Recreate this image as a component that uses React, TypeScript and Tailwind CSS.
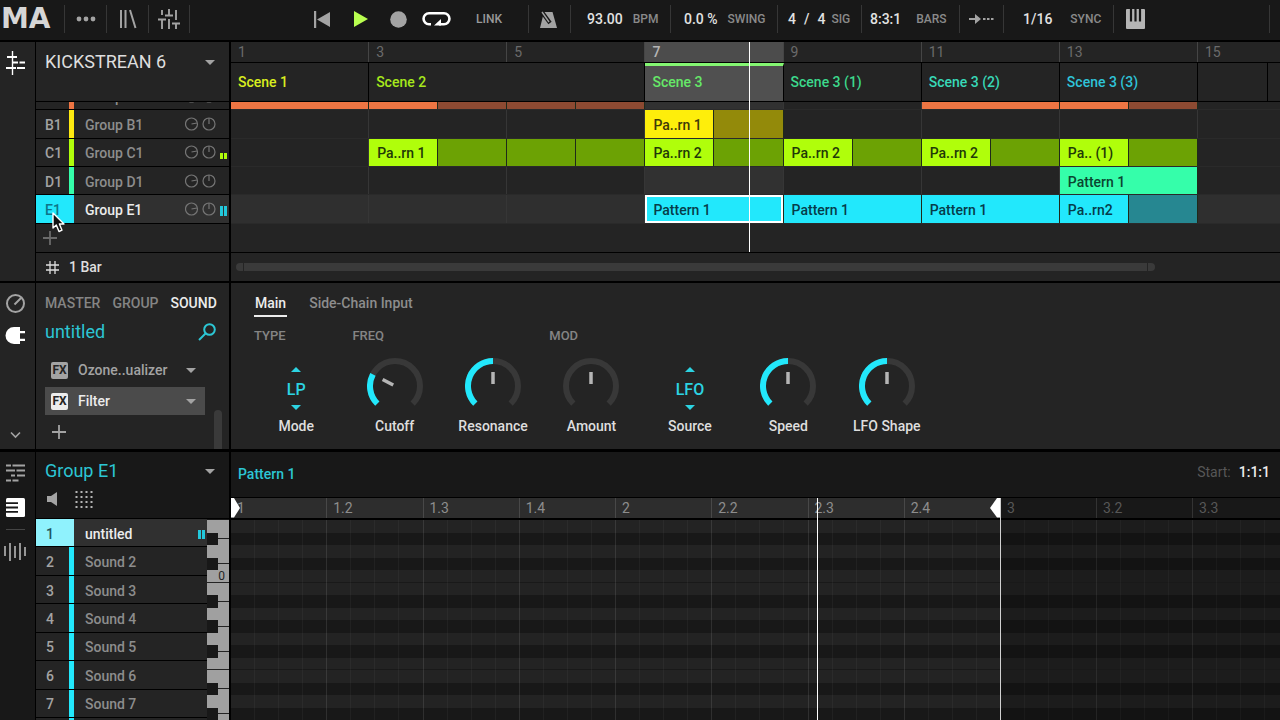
import { useState, type ReactNode } from "react";

type Segment = { span: 1 | 2; label?: string; fill?: string; selected?: boolean; lit?: boolean };

const scenes = [
  { bar: 1, name: "Scene 1", color: "text-[#d9ee1f]" },
  { bar: 3, name: "Scene 2", color: "text-[#a6e81c]" },
  { bar: 5, name: "", color: "" },
  { bar: 7, name: "Scene 3", color: "text-[#66e868]", active: true },
  { bar: 9, name: "Scene 3 (1)", color: "text-[#3cd98c]" },
  { bar: 11, name: "Scene 3 (2)", color: "text-[#38d9b8]" },
  { bar: 13, name: "Scene 3 (3)", color: "text-[#2fc3d9]" },
];

const empty: Segment = { span: 2 };
const lit: Segment = { span: 2, lit: true };

const orange = "bg-[#ee7543]";
const orangeDim = "bg-[#8d4a32]";
const lime = "bg-[#b0fe0b] text-[#1f3a08]";
const limeDim = "bg-[#6ca204]";
const cyan = "bg-[#22e8fc] text-[#063c4a]";

const groups: {
  code?: string;
  name: string;
  border: string;
  meter?: string;
  selected?: boolean;
  segments: Segment[];
}[] = [
  {
    name: "Group A1",
    border: "border-[#ee7543]",
    segments: [
      { span: 2, fill: orange },
      { span: 1, fill: orange },
      { span: 1, fill: orangeDim },
      { span: 1, fill: orangeDim },
      { span: 1, fill: orangeDim },
      lit,
      empty,
      { span: 2, fill: orange },
      { span: 1, fill: orange },
      { span: 1, fill: orangeDim },
    ],
  },
  {
    code: "B1",
    name: "Group B1",
    border: "border-[#fde910]",
    segments: [
      empty,
      empty,
      empty,
      { span: 1, label: "Pa..rn 1", fill: "bg-[#feee0b] text-[#3f3a08]" },
      { span: 1, fill: "bg-[#938a0a]" },
      empty,
      empty,
      empty,
    ],
  },
  {
    code: "C1",
    name: "Group C1",
    border: "border-[#b0fe0b]",
    meter: "h-[6px] bg-[#b0fe0b]",
    segments: [
      empty,
      { span: 1, label: "Pa..rn 1", fill: lime },
      { span: 1, fill: limeDim },
      { span: 1, fill: limeDim },
      { span: 1, fill: limeDim },
      { span: 1, label: "Pa..rn 2", fill: lime },
      { span: 1, fill: limeDim },
      { span: 1, label: "Pa..rn 2", fill: lime },
      { span: 1, fill: limeDim },
      { span: 1, label: "Pa..rn 2", fill: lime },
      { span: 1, fill: limeDim },
      { span: 1, label: "Pa.. (1)", fill: lime },
      { span: 1, fill: limeDim },
    ],
  },
  {
    code: "D1",
    name: "Group D1",
    border: "border-[#35feaa]",
    segments: [
      empty,
      empty,
      empty,
      lit,
      empty,
      empty,
      { span: 2, label: "Pattern 1", fill: "bg-[#35feaa] text-[#0b4631]" },
    ],
  },
  {
    code: "E1",
    name: "Group E1",
    border: "border-[#22e8fc]",
    meter: "h-[10px] bg-[#22c8dc]",
    selected: true,
    segments: [
      empty,
      empty,
      empty,
      { span: 2, label: "Pattern 1", fill: cyan, selected: true },
      { span: 2, label: "Pattern 1", fill: cyan },
      { span: 2, label: "Pattern 1", fill: cyan },
      { span: 1, label: "Pa..rn2", fill: cyan },
      { span: 1, fill: "bg-[#268791]" },
    ],
  },
];

const params = [
  { label: "Mode", section: "TYPE", options: "LP" },
  { label: "Cutoff", section: "FREQ", value: 27 },
  { label: "Resonance", value: 50 },
  { label: "Amount", section: "MOD", value: 50, bipolar: true },
  { label: "Source", options: "LFO" },
  { label: "Speed", value: 50 },
  { label: "LFO Shape", value: 50 },
];

const sounds = ["untitled", "Sound 2", "Sound 3", "Sound 4", "Sound 5", "Sound 6", "Sound 7"];

// Rows of the piano roll from top to bottom
const keys = ["E", "D#", "D", "C#", "C", "B", "A#", "A", "G#", "G", "F#", "F", "E", "D#", "D", "C#"];

const beats = ["1", "1.2", "1.3", "1.4", "2", "2.2", "2.3", "2.4"];
const beatsAfter = ["3", "3.2", "3.3"];

function Caret({ className = "" }: { className?: string }) {
  return (
    <svg width="10" height="5" viewBox="0 0 10 5" className={className} fill="currentColor">
      <path d="M0 0h10L5 5z" />
    </svg>
  );
}

function Plus({ className = "" }: { className?: string }) {
  return (
    <svg width="14" height="14" viewBox="0 0 14 14" className={className} stroke="currentColor" strokeWidth="1.8">
      <path d="M7 0v14M0 7h14" />
    </svg>
  );
}

function Field({ value, unit, className }: { value: ReactNode; unit: string; className: string }) {
  return (
    <div className={`flex h-7 flex-none items-center border-r border-[#363636] ${className}`}>
      <span className="text-sm font-medium text-[#e2e2e2]">{value}</span>
      <span className="text-xs font-medium text-[#8a8a8a]">{unit}</span>
    </div>
  );
}

function Toolbar() {
  const cell = "flex h-7 flex-none items-center justify-center border-r border-[#363636] text-[#a3a3a3]";
  return (
    <header className="flex h-[42px] flex-none items-center border-b-2 border-black bg-[#181818] pb-[2px]">
      <div className="flex h-7 w-[65px] flex-none items-center border-r border-[#363636] pl-px font-['DejaVu_Sans',sans-serif] text-[28px] leading-none font-bold text-[#d6d6d6]">
        MA
      </div>
      <button aria-label="Menu" className={`${cell} w-[42px]`}>
        <svg width="20" height="6" viewBox="0 0 20 6" fill="currentColor">
          <circle cx="3" cy="3" r="2.4" />
          <circle cx="10" cy="3" r="2.4" />
          <circle cx="17" cy="3" r="2.4" />
        </svg>
      </button>
      <button aria-label="Browser" className={`${cell} w-[42px]`}>
        <svg width="18" height="20" viewBox="0 0 18 20" fill="none" stroke="currentColor" strokeWidth="2">
          <path d="M2 1v18M6.500 1v18M11 1l5.500 18" />
        </svg>
      </button>
      <button aria-label="Mixer" className={`${cell} w-[41px]`}>
        <svg width="22" height="20" viewBox="0 0 22 20" fill="none" stroke="currentColor" strokeWidth="1.900">
          <path d="M4 1v5M0 10.500h8M4 10.500V20M11 0v6M7 6.500h8M11 10v10M18 1v10M14 14.500h8M18 14.500V20" />
        </svg>
      </button>

      <div className="flex h-7 w-[339px] flex-none items-center border-r border-[#363636] pl-[113px] text-[#a3a3a3]">
        <button aria-label="Restart" className="flex w-[38px] justify-center">
          <svg width="16" height="17" viewBox="0 0 16 17" fill="currentColor">
            <path d="M0 0h2.200v17H0zM16 1v15L3 8.500z" />
          </svg>
        </button>
        <button aria-label="Play" className="flex w-[38px] justify-center pl-[2px] text-[#b9fe50]">
          <svg width="14" height="16" viewBox="0 0 14 16" fill="currentColor">
            <path d="M0 0l14 8-14 8z" />
          </svg>
        </button>
        <button aria-label="Record" className="flex w-[38px] justify-center">
          <svg width="17" height="17" viewBox="0 0 17 17" fill="currentColor">
            <circle cx="8.500" cy="8.500" r="8.300" />
          </svg>
        </button>
        <button aria-label="Loop" className="flex w-[38px] justify-center text-white">
          <svg width="29" height="16" viewBox="0 0 29 16" fill="none" stroke="currentColor" strokeWidth="2.600">
            <path d="M9 13.200H7a5.300 5.300 0 0 1 0-10.900h15a5.300 5.300 0 0 1 0 10.900h-5" />
            <path d="M12 14.500l7-6.500v6.500z" fill="currentColor" stroke="none" />
          </svg>
        </button>
        <button className="ml-[21px] text-xs font-medium text-[#9a9a9a]">LINK</button>
      </div>

      <button aria-label="Metronome" className={`${cell} w-[42px] pr-[2px]`}>
        <svg width="17" height="17" viewBox="0 0 17 17">
          <path d="M4 1h8.500L17 17H0z" fill="currentColor" />
          <path d="M2 1l8 11" stroke="#181818" strokeWidth="4" />
          <path d="M2 1l7 10" stroke="currentColor" strokeWidth="1.400" />
        </svg>
      </button>
      <Field value="93.00" unit="BPM" className="w-[100px] gap-[10px] pl-4" />
      <Field value="0.0 %" unit="SWING" className="w-[107px] gap-[10px] pl-[13px]" />
      <Field
        value={
          <span className="flex gap-2">
            <span>4</span>
            <span>/</span>
            <span>4</span>
          </span>
        }
        unit="SIG"
        className="w-[84px] gap-[6px] pl-[10px]"
      />
      <Field value="8:3:1" unit="BARS" className="w-[98px] gap-[15px] pl-2" />
      <button aria-label="Follow" className={`${cell} w-11`}>
        <svg width="25" height="10" viewBox="0 0 25 10" fill="currentColor">
          <path d="M0 4h6V0l6 5-6 5V6H0zM14 4h2.500v2H14zM18 4h2.500v2H18zM22 4h2.500v2H22z" />
        </svg>
      </button>
      <Field value="1/16" unit="SYNC" className="w-[110px] gap-[18px] pl-[19px]" />
      <div className="mr-[10px] flex h-7 flex-1 items-center border-r border-[#363636] pl-3">
        <button aria-label="Keyboard" className="text-[#b5b5b5]">
          <svg width="19" height="20" viewBox="0 0 19 20">
            <rect width="19" height="20" rx="1" fill="currentColor" />
            <path d="M5 0v12.500M9.500 0v12.500M14 0v12.500" stroke="#181818" strokeWidth="2.200" />
          </svg>
        </button>
      </div>
    </header>
  );
}

function GroupRow({ group }: { group: (typeof groups)[number] }) {
  return (
    <div className={`flex items-center border-b border-black ${group.selected ? "bg-[#303030] text-[#ececec]" : "text-[#8d8d8d]"}`}>
      <div
        className={`flex h-full w-[38px] flex-none items-center border-r-[5px] pt-[2px] pl-[9px] text-sm font-medium ${group.border} ${
          group.selected ? "bg-[#22e8fc] text-[#0d7488]" : "text-[#a3a3a3]"
        }`}
      >
        {group.code}
      </div>
      <span className="ml-[11px] flex-1 pt-[2px] text-sm font-medium">{group.name}</span>
      <svg width="31" height="14" viewBox="0 0 31 14" fill="none" stroke="#757575" strokeWidth="1.200" className="mr-1">
        <circle cx="6.500" cy="7" r="6" />
        <path d="M6.500 7l5.500-1" />
        <circle cx="24" cy="7" r="6" />
        <path d="M24 1v6" />
      </svg>
      <div className="mr-[2px] flex h-[14px] w-[7px] items-end gap-px">
        {group.meter && (
          <>
            <div className={`w-[3px] ${group.meter}`} />
            <div className={`w-[3px] ${group.meter}`} />
          </>
        )}
      </div>
    </div>
  );
}

function SegmentCell({ seg }: { seg: Segment }) {
  const span = seg.span === 2 ? "col-span-2" : "col-span-1";
  if (!seg.fill) {
    return <div className={`${span} border-r border-[#363636] ${seg.lit ? "bg-[#313131]" : ""}`} />;
  }
  return (
    <div className={`${span} border-r border-[#1f2a1a]`}>
      <div
        className={`flex h-full items-center text-sm font-medium ${seg.fill} ${
          seg.selected ? "border-2 border-white pt-[2px] pl-[6px]" : "pt-[2px] pl-2"
        }`}
      >
        {seg.label}
      </div>
    </div>
  );
}

function Arranger() {
  return (
    <section className="flex flex-none border-b-2 border-black bg-[#242424]">
      <nav className="w-9 flex-none border-r border-black pt-[9px] pl-[5px]">
        <button aria-label="Arranger view" className="block text-white">
          <svg width="20" height="24" viewBox="0 0 20 24" fill="none" stroke="currentColor" strokeWidth="2">
            <path d="M7.500 0v24" strokeWidth="1.400" />
            <path d="M2 6h10M7 11.500h6M14.500 11.500H20M1 17h10M12 17h8" />
          </svg>
        </button>
      </nav>

      <div className="w-[195px] flex-none border-r-2 border-black">
        <div className="h-[60px] border-b border-black">
          <button className="flex h-10 w-full items-center justify-between pr-[14px] pl-[9px] text-lg text-[#dedede]">
            KICKSTREAN 6
            <Caret className="text-[#a3a3a3]" />
          </button>
        </div>
        <div className="flex h-[150px] flex-col justify-end overflow-hidden">
          <div className="grid h-[170px] flex-none grid-rows-6">
            {groups.map((group) => (
              <GroupRow key={group.name} group={group} />
            ))}
            <button aria-label="Add group" className="flex items-center pl-[7px] text-[#6a6a6a]">
              <Plus />
            </button>
          </div>
        </div>
        <button className="flex h-[29px] w-full items-center border-t border-black pl-[10px] text-sm font-medium text-[#dedede]">
          <svg width="13" height="13" viewBox="0 0 13 13" fill="none" stroke="currentColor" strokeWidth="1.300" className="mr-[10px]">
            <path d="M4 0v13M9 0v13M0 4h13M0 9h13" />
          </svg>
          1 Bar
        </button>
      </div>

      <div className="min-w-0 flex-1 overflow-hidden">
        <div className="relative">
          <div className="flex h-[21px] border-b border-black text-sm leading-5 text-[#6b6b6b]">
            <div className="grid w-[967px] flex-none grid-cols-7">
              {scenes.map((s) => (
                <div
                  key={s.bar}
                  className={`border-r border-[#454545] pl-[7px] ${s.active ? "bg-[#4c4c4c] font-medium text-[#b5b5b5]" : ""}`}
                >
                  {s.bar}
                </div>
              ))}
            </div>
            <div className="pl-[7px]">15</div>
          </div>
          <div className="flex h-[39px] border-b border-black text-sm font-medium">
            <div className="grid w-[967px] flex-none grid-cols-7">
              {scenes.map((s) => (
                <div
                  key={s.bar}
                  className={`flex items-center pl-[7px] ${s.color} ${
                    s.active
                      ? "border-t-[3px] border-r border-t-[#84f672] border-r-black bg-[#505050] pb-[3px]"
                      : s.bar === 3
                        ? ""
                        : "border-r border-black"
                  }`}
                >
                  {s.name}
                </div>
              ))}
            </div>
            <div className="w-[70px] flex-none border-r border-black" />
          </div>
          <div className="flex h-[150px] flex-col justify-end overflow-hidden">
            <div className="grid h-[170px] flex-none grid-rows-6">
              {groups.map((group) => (
                <div key={group.name} className={`border-b border-[#2a2a2a] ${group.selected ? "bg-[#2f2f2f]" : ""}`}>
                  <div className="grid h-full w-[967px] grid-cols-14">
                    {group.segments.map((seg, i) => (
                      <SegmentCell key={i} seg={seg} />
                    ))}
                  </div>
                </div>
              ))}
            </div>
          </div>
          {/* Playhead */}
          <div className="absolute inset-y-0 left-[518px] w-px bg-white" />
        </div>
        <div className="flex h-[29px] items-center border-t border-black pl-[5px]">
          <div className="flex h-2 w-[88%] gap-px">
            <div className="w-[7px] rounded-l bg-[#3a3a3a]" />
            <div className="flex-1 bg-[#3a3a3a]" />
            <div className="w-[7px] rounded-r bg-[#3a3a3a]" />
          </div>
        </div>
      </div>
    </section>
  );
}

function point(angle: number, r: number) {
  const a = (angle * Math.PI) / 180;
  return `${28 + r * Math.sin(a)} ${28 - r * Math.cos(a)}`;
}

function arc(from: number, to: number) {
  return `M${point(from, 25)}A25 25 0 ${to - from > 180 ? 1 : 0} 1 ${point(to, 25)}`;
}

function Knob({ id, initial, bipolar }: { id: string; initial: number; bipolar?: boolean }) {
  const [value, setValue] = useState(initial);
  const angle = -135 + value * 2.7;
  const from = bipolar ? Math.min(0, angle) : -135;
  const to = bipolar ? Math.max(0, angle) : angle;
  return (
    <div className="relative h-14 w-14">
      <svg width="56" height="56" viewBox="0 0 56 56" fill="none">
        <path d={arc(-135, 135)} stroke="#383838" strokeWidth="6" />
        {to > from && <path d={arc(from, to)} stroke="#22e8fc" strokeWidth="6" />}
        <path d={`M${point(angle, 2)}L${point(angle, 14)}`} stroke="#b5b5b5" strokeWidth="3.500" />
      </svg>
      <input
        id={id}
        type="range"
        min={0}
        max={100}
        value={value}
        onChange={(e) => setValue(Number(e.target.value))}
        className="absolute inset-0 h-full w-full cursor-pointer opacity-0"
      />
    </div>
  );
}

function Plugins() {
  const slots = [
    { name: "Ozone..ualizer", active: false },
    { name: "Filter", active: true },
  ];
  return (
    <section className="flex h-[169px] flex-none border-b-[3px] border-black bg-[#242424]">
      <nav className="flex w-9 flex-none flex-col border-r border-black pt-[10px] pb-[10px] pl-[5px]">
        <button aria-label="Channel" className="text-[#a3a3a3]">
          <svg width="21" height="21" viewBox="0 0 21 21" fill="none" stroke="currentColor" strokeWidth="2">
            <circle cx="10.500" cy="10.500" r="8.500" />
            <path d="M9.500 11.500l6.500-6.500" />
          </svg>
        </button>
        <button aria-label="Plug-in" className="mt-[13px] text-white">
          <svg width="21" height="17" viewBox="0 0 21 17" fill="currentColor">
            <path d="M9 0h6v4h5v2.200h-5v5.600h5V14h-5v3H9A8.500 8.500 0 0 1 9 0z" />
          </svg>
        </button>
        <button aria-label="Collapse" className="mt-auto pl-[5px] text-[#a3a3a3]">
          <svg width="11" height="8" viewBox="0 0 11 8" fill="none" stroke="currentColor" strokeWidth="1.600">
            <path d="M1 1.500l4.500 4.500L10 1.500" />
          </svg>
        </button>
      </nav>

      <div className="flex w-[195px] flex-none flex-col border-r-2 border-black pt-[10px] pl-[9px]">
        <div className="flex gap-3 text-sm leading-5 font-medium text-[#858585]">
          <button>MASTER</button>
          <button>GROUP</button>
          <button className="text-[#ececec]">SOUND</button>
        </div>
        <div className="mt-[5px] flex items-center justify-between pr-[13px] text-[#2cc6d4]">
          <span className="text-lg leading-7">untitled</span>
          <button aria-label="Search plug-ins">
            <svg width="18" height="18" viewBox="0 0 18 18" fill="none" stroke="currentColor" strokeWidth="2">
              <circle cx="11.500" cy="6.500" r="5.300" />
              <path d="M7.500 10.500L1 17" />
            </svg>
          </button>
        </div>
        <div className="mt-[10px] flex min-h-0 flex-1 justify-between">
          <div className="flex w-40 flex-col gap-[3px]">
            {slots.map((slot) => (
              <button
                key={slot.name}
                className={`flex h-7 flex-none items-center pr-[9px] pl-[6px] text-sm font-medium ${
                  slot.active ? "bg-[#4b4b4b] text-[#ececec]" : "text-[#a3a3a3]"
                }`}
              >
                <span className="flex h-[17px] w-[17px] items-center justify-center rounded-xs bg-current">
                  <span className="text-xs leading-none font-bold text-[#242424]">FX</span>
                </span>
                <span className="ml-[10px] flex-1 text-left">{slot.name}</span>
                <Caret className="text-[#a3a3a3]" />
              </button>
            ))}
            <button aria-label="Add plug-in" className="mt-[7px] ml-[7px] text-[#a3a3a3]">
              <Plus />
            </button>
          </div>
          <div className="mt-[54px] mr-[7px] w-2 rounded-t bg-[#3a3a3a]" />
        </div>
      </div>

      <div className="min-w-0 flex-1 overflow-hidden pt-[10px] pl-4">
        <div className="ml-[7px] flex gap-[22px] text-sm leading-5 font-medium">
          <button className="border-b-2 border-[#ececec] px-px pb-[2px] text-[#ececec]">Main</button>
          <button className="pb-1 text-[#8d8d8d]">Side-Chain Input</button>
        </div>
        <div className="mt-[9px] grid w-[689px] grid-cols-7">
          {params.map((p) => (
            <div key={p.label} className="flex flex-col items-center">
              <div className="h-5 w-full pl-[7px] text-[13px] leading-5 font-medium text-[#858585]">{p.section}</div>
              <div className="mt-3 flex h-14 items-center">
                {p.options ? (
                  <div className="flex flex-col items-center pt-1 text-[#2cd3e2]">
                    <button aria-label={`Previous ${p.label}`}>
                      <Caret className="rotate-180" />
                    </button>
                    <span className="my-[3px] pt-[3px] text-base leading-6 font-medium">{p.options}</span>
                    <button aria-label={`Next ${p.label}`}>
                      <Caret />
                    </button>
                  </div>
                ) : (
                  <Knob id={`knob-${p.label}`} initial={p.value ?? 0} bipolar={p.bipolar} />
                )}
              </div>
              <label htmlFor={p.options ? undefined : `knob-${p.label}`} className="mt-[2px] text-sm leading-5 font-medium text-[#dedede]">
                {p.label}
              </label>
            </div>
          ))}
        </div>
      </div>
    </section>
  );
}

function PianoKeys() {
  return (
    <div className="mt-px grid w-[22px] flex-none grid-rows-16 bg-[#a0a0a0]">
      {keys.map((key, i) =>
        key.includes("#") ? (
          <div key={i} className="flex items-center">
            <div className="h-full w-[11px] bg-[#181818]" />
            <div className="h-px flex-1 bg-[#242424]" />
          </div>
        ) : (
          <div
            key={i}
            className={`flex items-center justify-end pr-1 text-xs leading-none text-[#242424] ${
              key === "C" || key === "F" ? "border-b border-[#242424]" : ""
            }`}
          >
            {key === "C" && "0"}
          </div>
        )
      )}
    </div>
  );
}

function NoteRows({ active }: { active?: boolean }) {
  return (
    <div className="grid h-full grid-rows-16">
      {keys.map((key, i) => {
        const tone = key.includes("#")
          ? active
            ? "bg-[#181818]"
            : "bg-[#131313]"
          : active
            ? "bg-[#232323]"
            : "bg-[#1c1c1c]";
        return <div key={i} className={`${tone} ${key === "C" || key === "F" ? "border-b border-[#191919]" : ""}`} />;
      })}
    </div>
  );
}

function PatternEditor() {
  return (
    <section className="flex min-h-0 flex-1 bg-[#181818]">
      <nav className="flex w-9 flex-none flex-col items-start border-r border-black pt-3 pl-[6px] text-[#a3a3a3]">
        <button aria-label="Event list">
          <svg width="19" height="18" viewBox="0 0 19 18" fill="none" stroke="currentColor" strokeWidth="2">
            <path d="M0 1.500h5M6.500 1.500H19M0 6.500h9M10.500 6.500H19M5 11.500h4M11 11.500h8M0 16.500h5M6.500 16.500h6" />
          </svg>
        </button>
        <button aria-label="Piano roll" className="mt-4 text-white">
          <svg width="19" height="19" viewBox="0 0 19 19">
            <rect width="19" height="19" rx="1.500" fill="currentColor" />
            <path d="M0 5.200h12M0 9.500h12M0 13.800h12" stroke="#181818" strokeWidth="1.800" />
          </svg>
        </button>
        <div className="mt-3 h-px w-[19px] bg-[#454545]" />
        <button aria-label="Sampling" className="mt-3 -ml-[2px]">
          <svg width="22" height="20" viewBox="0 0 22 20" fill="none" stroke="currentColor" strokeWidth="1.800">
            <path d="M1 4v10M6 1v18M11 4v12M16 1v17M21 5v9" />
          </svg>
        </button>
      </nav>

      <div className="flex w-[195px] flex-none flex-col border-r-2 border-black">
        <div className="h-[67px] flex-none border-b border-black">
          <button className="flex h-[38px] w-full items-center justify-between pr-[14px] pl-[9px] text-lg text-[#2cc6d4]">
            Group E1
            <Caret className="text-[#a3a3a3]" />
          </button>
          <div className="flex items-center gap-[18px] pl-[11px]">
            <button aria-label="Preview" className="text-[#a3a3a3]">
              <svg width="10" height="14" viewBox="0 0 10 14" fill="currentColor">
                <path d="M0 4h4l6-4v14L4 10H0z" />
              </svg>
            </button>
            <button aria-label="Pad view" className="text-[#b5b5b5]">
              <svg width="18" height="18" viewBox="0 0 18 18" fill="none" stroke="currentColor" strokeWidth="2" strokeDasharray="2 3">
                <path d="M0.500 2h18M0.500 7h18M0.500 12h18M0.500 17h18" />
              </svg>
            </button>
          </div>
        </div>
        <div className="flex min-h-0 flex-1">
          <div className="flex min-w-0 flex-1 flex-col bg-[#242424]">
            <div className="grid h-[199px] flex-none grid-rows-7">
              {sounds.map((sound, i) => (
                <div
                  key={sound}
                  className={`flex items-center border-b border-black text-sm font-medium ${
                    i === 0 ? "bg-[#303030] text-[#ececec]" : "text-[#8d8d8d]"
                  }`}
                >
                  <div
                    className={`flex h-full w-[38px] flex-none items-center border-r-[5px] pt-[2px] pl-[10px] ${
                      i === 0 ? "border-[#8ff2fd] bg-[#8ff2fd] text-[#1f5560]" : "border-[#22e8fc] text-[#a3a3a3]"
                    }`}
                  >
                    {i + 1}
                  </div>
                  <span className="ml-[11px] flex-1 pt-[2px]">{sound}</span>
                  {i === 0 && (
                    <div className="mr-[2px] flex gap-px pt-1">
                      <div className="h-[9px] w-[3px] bg-[#22c8dc]" />
                      <div className="h-[9px] w-[3px] bg-[#22c8dc]" />
                    </div>
                  )}
                </div>
              ))}
            </div>
            <div className="w-[38px] flex-1 border-r-[5px] border-[#22e8fc]" />
          </div>
          <PianoKeys />
        </div>
      </div>

      <div className="flex min-w-0 flex-1 flex-col overflow-hidden">
        <div className="flex h-[46px] flex-none items-center justify-between border-b border-black pr-[10px] pb-[2px] pl-[7px] text-sm font-medium">
          <span className="text-[#2cc6d4]">Pattern 1</span>
          <div className="flex gap-2 pb-1">
            <span className="font-normal text-[#575757]">Start:</span>
            <span className="text-[#ececec]">1:1:1</span>
          </div>
        </div>
        <div className="relative flex min-h-0 flex-1 flex-col">
          <div className="flex h-[22px] flex-none border-b-2 border-black text-sm leading-5">
            <div className="grid w-[770px] flex-none grid-cols-8 bg-[#2d2d2d] text-[#8d8d8d]">
              {beats.map((b) => (
                <div key={b} className="border-r border-[#484848] pl-[6px]">
                  {b}
                </div>
              ))}
            </div>
            {beatsAfter.map((b) => (
              <div key={b} className="w-24 flex-none border-r border-[#333333] pl-[6px] text-[#575757]">
                {b}
              </div>
            ))}
          </div>
          <div className="flex min-h-0 flex-1">
            <div className="relative w-[770px] flex-none">
              <NoteRows active />
              <div className="absolute inset-0 grid grid-cols-32">
                {Array.from({ length: 32 }, (_, i) => (
                  <div key={i} className={`border-r ${i % 4 === 3 ? "border-white/10" : "border-white/[0.04]"}`} />
                ))}
              </div>
            </div>
            <div className="relative min-w-0 flex-1 overflow-hidden">
              <NoteRows />
              <div className="absolute inset-0 flex">
                {Array.from({ length: 12 }, (_, i) => (
                  <div key={i} className={`w-6 flex-none border-r ${i % 4 === 3 ? "border-white/[0.07]" : "border-white/[0.03]"}`} />
                ))}
              </div>
            </div>
          </div>
          {/* Loop start and end markers */}
          <svg width="10" height="20" viewBox="0 0 10 20" className="absolute top-0 left-0" fill="#fff">
            <path d="M0 0h3l6 10-6 9.500H0z" />
          </svg>
          <div className="absolute inset-y-0 left-[760px] flex w-[10px] justify-end border-r border-[#d0d0d0]">
            <svg width="10" height="20" viewBox="0 0 10 20" className="flex-none" fill="#fff">
              <path d="M10 0H7L0 10l7 9.500h3z" />
            </svg>
          </div>
          {/* Playhead */}
          <div className="absolute inset-y-0 left-[586px] w-px bg-white" />
        </div>
      </div>
    </section>
  );
}

export default function App() {
  return (
    <div className="relative flex h-screen flex-col overflow-hidden bg-black font-['Roboto',sans-serif] select-none">
      <Toolbar />
      <Arranger />
      <Plugins />
      <PatternEditor />
      {/* Mouse pointer */}
      <svg width="14" height="21" viewBox="0 0 14 21" className="absolute top-[212px] left-[52px]">
        <path d="M1 1v15l3.300-3 2.700 6.500 3-1.300L7.400 12H12z" fill="#111" stroke="#fff" strokeWidth="1.400" strokeLinejoin="round" />
      </svg>
    </div>
  );
}
